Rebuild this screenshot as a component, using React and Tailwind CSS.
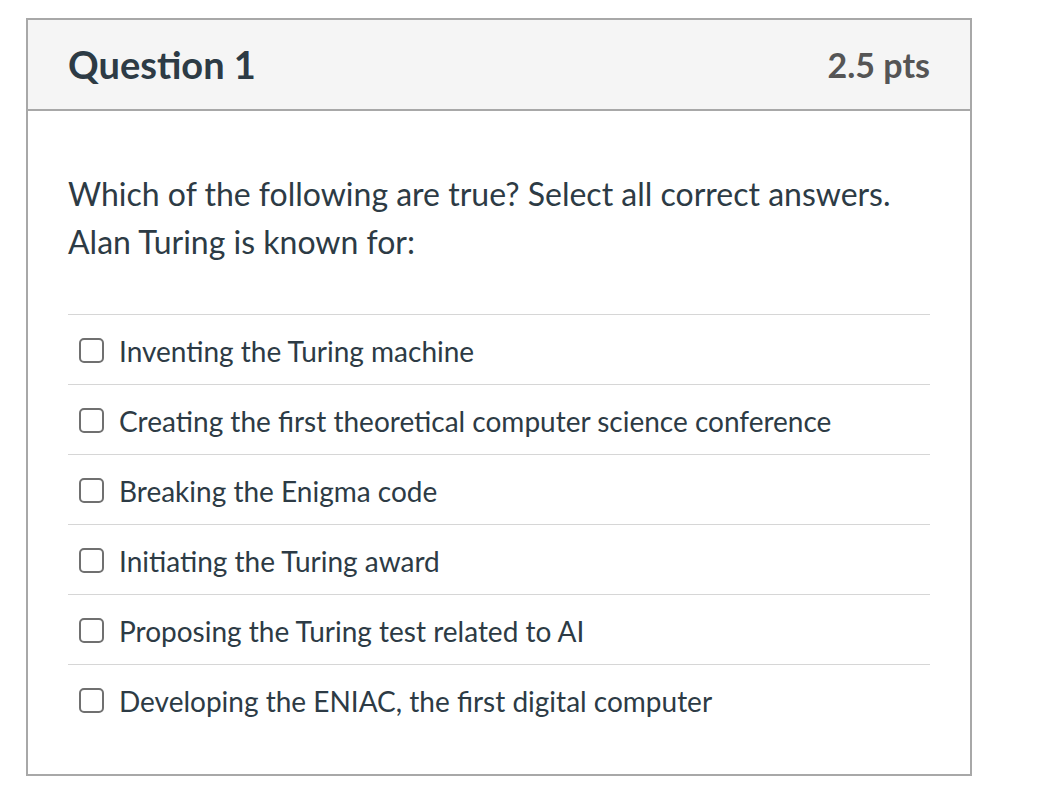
export default function App() {
  const options = [
    "Inventing the Turing machine",
    "Creating the first theoretical computer science conference",
    "Breaking the Enigma code",
    "Initiating the Turing award",
    "Proposing the Turing test related to AI",
    "Developing the ENIAC, the first digital computer",
  ];
  return (
    <div className="min-h-[806px] w-[1042px] bg-white pl-[26px] pt-[18px]" style={{ fontFamily: "Lato, 'Noto Sans', sans-serif" }}>
      <div className="w-[946px] border-2 border-[#a8a8a8]">
        <div className="flex h-[91px] items-center justify-between border-b-2 border-[#a8a8a8] bg-[#f5f5f5] pl-[40px] pr-[40px]">
          <div className="text-[38px] font-bold text-[#2d3b45]">Question 1</div>
          <div className="text-[34px] font-bold text-[#555555]">2.5 pts</div>
        </div>
        <div className="px-[40px] pb-[40px] pt-[59px]">
          <div className="text-[32px] leading-[48px] text-[#2d3b45]">
            Which of the following are true? Select all correct answers.
            <br />
            Alan Turing is known for:
          </div>
          <div className="mt-[48px]">
            {options.map((o) => (
              <div key={o} className="flex h-[70px] items-center border-t border-[#d6d6d6] pt-[2px]">
                <div className="ml-[11px] mr-[15px] h-[25px] w-[25px] rounded-[5px] border-2 border-[#707070]" />
                <div className="text-[28px] text-[#2d3b45]">{o}</div>
              </div>
            ))}
          </div>
        </div>
      </div>
    </div>
  );
}
